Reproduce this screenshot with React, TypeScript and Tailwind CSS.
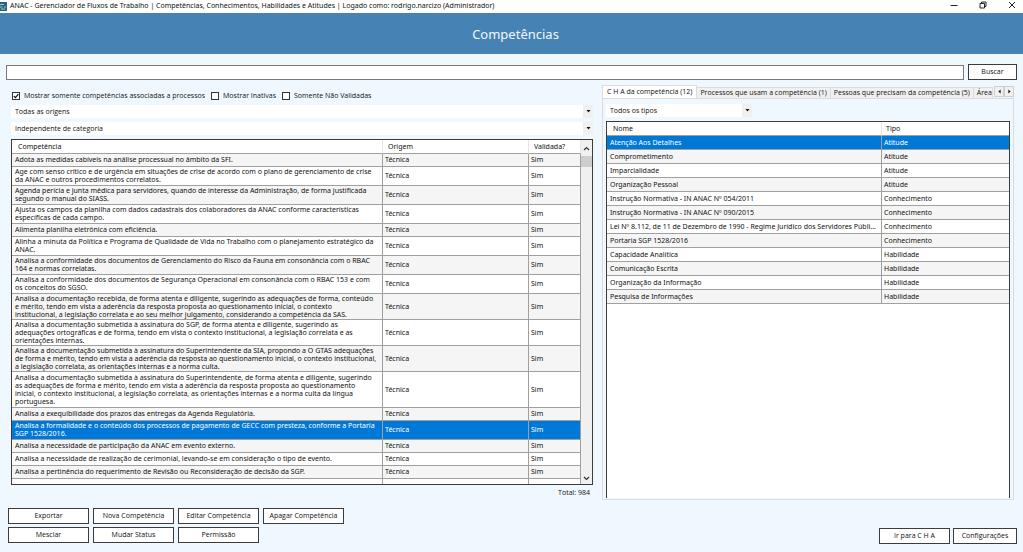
import React, { useState } from "react";
import clsx from "clsx";

interface Competencia {
  nome: string;
  linhas: 1 | 2 | 3 | 4;
}

const competencias: Competencia[] = [
  { linhas: 1, nome: "Adota as medidas cabíveis na análise processual no âmbito da SFI." },
  { linhas: 2, nome: "Age com senso crítico e de urgência em situações de crise de acordo com o plano de gerenciamento de crise\nda ANAC e outros procedimentos correlatos." },
  { linhas: 2, nome: "Agenda perícia e junta médica para servidores, quando de interesse da Administração, de forma justificada\nsegundo o manual do SIASS." },
  { linhas: 2, nome: "Ajusta os campos da planilha com dados cadastrais dos colaboradores da ANAC conforme características\nespecíficas de cada campo." },
  { linhas: 1, nome: "Alimenta planilha eletrônica com eficiência." },
  { linhas: 2, nome: "Alinha a minuta da Política e Programa de Qualidade de Vida no Trabalho com o planejamento estratégico da\nANAC." },
  { linhas: 2, nome: "Analisa a conformidade dos documentos de Gerenciamento do Risco da Fauna em consonância com o RBAC\n164 e normas correlatas." },
  { linhas: 2, nome: "Analisa a conformidade dos documentos de Segurança Operacional em consonância com o RBAC 153 e com\nos conceitos do SGSO." },
  { linhas: 3, nome: "Analisa a documentação recebida, de forma atenta e diligente, sugerindo as adequações de forma, conteúdo\ne mérito, tendo em vista a aderência da resposta proposta ao questionamento inicial, o contexto\ninstitucional, a legislação correlata e ao seu melhor julgamento, considerando a competência da SAS." },
  { linhas: 3, nome: "Analisa a documentação submetida à assinatura do SGP, de forma atenta e diligente, sugerindo as\nadequações ortográficas e de forma, tendo em vista o contexto institucional, a legislação correlata e as\norientações internas." },
  { linhas: 3, nome: "Analisa a documentação submetida à assinatura do Superintendente da SIA, propondo a O GTAS adequações\nde forma e mérito, tendo em vista a aderência da resposta ao questionamento inicial, o contexto institucional,\na legislação correlata, as orientações internas e a norma culta." },
  { linhas: 4, nome: "Analisa a documentação submetida à assinatura do Superintendente, de forma atenta e diligente, sugerindo\nas adequações de forma e mérito, tendo em vista a aderência da resposta proposta ao questionamento\ninicial, o contexto institucional, a legislação correlata, as orientações internas e a norma culta da língua\nportuguesa." },
  { linhas: 1, nome: "Analisa a exequibilidade dos prazos das entregas da Agenda Regulatória." },
  { linhas: 2, nome: "Analisa a formalidade e o conteúdo dos processos de pagamento de GECC com presteza, conforme a Portaria\nSGP 1528/2016." },
  { linhas: 1, nome: "Analisa a necessidade de participação da ANAC em evento externo." },
  { linhas: 1, nome: "Analisa a necessidade de realização de cerimonial, levando-se em consideração o tipo de evento." },
  { linhas: 1, nome: "Analisa a pertinência do requerimento de Revisão ou Reconsideração de decisão da SGP." },
];

const cha = [
  ["Atenção Aos Detalhes", "Atitude"],
  ["Comprometimento", "Atitude"],
  ["Imparcialidade", "Atitude"],
  ["Organização Pessoal", "Atitude"],
  ["Instrução Normativa - IN ANAC Nº 054/2011", "Conhecimento"],
  ["Instrução Normativa - IN ANAC Nº 090/2015", "Conhecimento"],
  ["Lei Nº 8.112, de 11 de Dezembro de 1990 - Regime Jurídico dos Servidores Públi...", "Conhecimento"],
  ["Portaria SGP 1528/2016", "Conhecimento"],
  ["Capacidade Analítica", "Habilidade"],
  ["Comunicação Escrita", "Habilidade"],
  ["Organização da Informação", "Habilidade"],
  ["Pesquisa de Informações", "Habilidade"],
];

const tabs = [
  "C H A da competência (12)",
  "Processos que usam a competência (1)",
  "Pessoas que precisam da competência (5)",
  "Área",
];

const rowHeights = { 1: "h-[13px]", 2: "h-[19px]", 3: "h-[26px]", 4: "h-[36px]" };

function ActionButton({ children, className }: { children: React.ReactNode; className?: string }) {
  return (
    <button
      type="button"
      className={clsx("h-4 border border-[#3c3c3c] bg-white text-center leading-3 whitespace-nowrap hover:bg-sky-50", className)}
    >
      {children}
    </button>
  );
}

function Combo({ label, option, className }: { label: string; option: string; className?: string }) {
  return (
    <div className={clsx("relative h-[13px] bg-white", className)}>
      <select aria-label={label} className="block h-full w-full appearance-none bg-transparent pl-1 leading-3 outline-none">
        <option>{option}</option>
      </select>
      <span className="pointer-events-none absolute inset-y-0 right-0 flex w-[10px] items-center justify-center bg-[#f0f0f0]">
        <svg width="5" height="3" viewBox="0 0 5 3"><path d="M0.5 0h4L2.5 2.6z" fill="#111" /></svg>
      </span>
    </div>
  );
}

function Check({ label, defaultChecked }: { label: string; defaultChecked?: boolean }) {
  return (
    <label className="flex items-center gap-1">
      <span className="relative flex size-2">
        <input
          type="checkbox"
          defaultChecked={defaultChecked}
          className="peer size-2 appearance-none border border-[#333] bg-white"
        />
        <svg viewBox="0 0 8 8" className="pointer-events-none absolute inset-0 hidden size-2 peer-checked:block">
          <path d="M1.8 4.1L3.4 5.7L6.4 2.2" fill="none" stroke="#111" strokeWidth="1.2" />
        </svg>
      </span>
      {label}
    </label>
  );
}

export default function App() {
  const [selected, setSelected] = useState(13);
  const [selectedCha, setSelectedCha] = useState(0);
  const [tab, setTab] = useState(0);

  return (
    <div className="flex h-screen flex-col overflow-hidden bg-[#f0f8ff] font-['Open_Sans','Noto_Sans',sans-serif] text-[7px] leading-[8px] text-[#111]">
      {/* Title bar */}
      <div className="flex h-[13px] shrink-0 items-start justify-between bg-white">
        <div className="flex items-center gap-[3px] font-['Noto_Sans',sans-serif] leading-3">
          <svg width="7" height="9" viewBox="0 0 7 9">
            <rect width="7" height="9" fill="#2b6478" />
            <path d="M0 2.5h4M0 5h2.5M4 5h2M1 7h4" stroke="#9cc7d4" />
          </svg>
          <span className="whitespace-nowrap">
            ANAC - Gerenciador de Fluxos de Trabalho | Competências, Conhecimentos, Habilidades e Atitudes | Logado como: rodrigo.narcizo (Administrador)
          </span>
        </div>
        <div className="flex h-[10px] items-center gap-[21px] pr-[7px]">
          <button type="button" aria-label="Minimizar">
            <svg width="8" height="8" viewBox="0 0 8 8"><path d="M0.5 4.5h7" stroke="#222" /></svg>
          </button>
          <button type="button" aria-label="Restaurar">
            <svg width="8" height="8" viewBox="0 0 8 8" fill="none" stroke="#222">
              <path d="M1 2.5h4.5v4.5h-4.5zM2.5 2.5V1H7v4.5H5.5" />
            </svg>
          </button>
          <button type="button" aria-label="Fechar">
            <svg width="8" height="8" viewBox="0 0 8 8"><path d="M1 1l6 6M7 1l-6 6" stroke="#222" /></svg>
          </button>
        </div>
      </div>

      <header className="flex h-[41px] shrink-0 items-center justify-center bg-[#4682b4]">
        <h1 className="pl-2 font-['Noto_Sans',sans-serif] text-[13px] leading-4 text-[#f0f8ff]">Competências</h1>
      </header>

      <form className="flex shrink-0 items-center gap-1 pt-[10px] pr-[6px] pl-[6px]" onSubmit={(e) => e.preventDefault()}>
        <input
          type="text"
          aria-label="Buscar competência"
          className="h-[15px] min-w-0 flex-1 border border-[#7a7a7a] bg-white px-1 outline-none"
        />
        <ActionButton className="w-[49px]">Buscar</ActionButton>
      </form>

      <main className="grid min-h-0 flex-1 grid-cols-[582fr_412fr] gap-[9px] pt-[5px] pr-[9px] pl-[11px]">
        <section className="flex min-h-0 min-w-0 flex-col">
          <div className="flex h-5 shrink-0 items-center gap-[6px] pt-px pl-px">
            <Check label="Mostrar somente competências associadas a processos" defaultChecked />
            <Check label="Mostrar Inativas" />
            <Check label="Somente Não Validadas" />
          </div>
          <Combo label="Origem" option="Todas as origens" className="shrink-0" />
          <Combo label="Categoria" option="Independente de categoria" className="mt-1 shrink-0" />

          <div className="mt-1 flex min-h-0 flex-1 border border-[#3c3c3c] bg-white">
            <div className="min-w-0 flex-1 overflow-hidden">
              <table className="w-full table-fixed border-separate border-spacing-0 font-['Noto_Sans',sans-serif]">
                <colgroup>
                  <col />
                  <col className="w-[146px]" />
                  <col className="w-[52px]" />
                </colgroup>
                <thead>
                  <tr className="h-[14px] text-left">
                    <th className="border-r border-b border-r-[#e5e5e5] border-b-[#a0a0a0] p-0 pl-[6px] font-normal">Competência</th>
                    <th className="border-r border-b border-r-[#e5e5e5] border-b-[#a0a0a0] p-0 pl-[5px] font-normal">Origem</th>
                    <th className="border-r border-b border-r-[#e5e5e5] border-b-[#a0a0a0] p-0 pl-[5px] font-normal">Validada?</th>
                  </tr>
                </thead>
                <tbody>
                  {competencias.map((c, i) => (
                    <tr
                      key={i}
                      onClick={() => setSelected(i)}
                      className={clsx(rowHeights[c.linhas], i === selected ? "bg-[#0078d7] text-white" : i % 2 === 0 ? "bg-[#f5f5f5]" : "bg-white")}
                    >
                      <td className="border-r border-b border-[#a0a0a0] p-0 pl-[3px] whitespace-pre">{c.nome}</td>
                      <td className="border-r border-b border-[#a0a0a0] p-0 pl-[2px]">Técnica</td>
                      <td className="border-r border-b border-[#a0a0a0] p-0 pl-[2px]">Sim</td>
                    </tr>
                  ))}
                  <tr className="h-[13px]">
                    <td className="border-r border-[#a0a0a0]" />
                    <td className="border-r border-[#a0a0a0]" />
                    <td className="border-r border-[#a0a0a0]" />
                  </tr>
                </tbody>
              </table>
            </div>
            <div className="flex w-[11px] shrink-0 flex-col items-center bg-[#f0f0f0]">
              <button type="button" aria-label="Rolar para cima" className="flex h-4 items-center">
                <svg width="7" height="5" viewBox="0 0 7 5"><path d="M1 4l2.5-2.5L6 4" fill="none" stroke="#333" strokeWidth="1.2" /></svg>
              </button>
              <div className="h-[11px] w-full bg-[#cdcdcd]" />
              <button type="button" aria-label="Rolar para baixo" className="mt-auto flex h-3 items-center">
                <svg width="7" height="5" viewBox="0 0 7 5"><path d="M1 1l2.5 2.5L6 1" fill="none" stroke="#333" strokeWidth="1.2" /></svg>
              </button>
            </div>
          </div>
          <p className="shrink-0 pt-1 pr-[3px] pb-[3px] text-right">Total: 984</p>
        </section>

        <section className="flex min-h-0 min-w-0 flex-col">
          <div className="flex h-[13px] shrink-0 items-end">
            {tabs.map((t, i) => (
              <button
                key={t}
                type="button"
                onClick={() => setTab(i)}
                className={clsx(
                  "shrink-0 border border-b-0 border-[#dcdcdc] whitespace-nowrap",
                  i === tab ? "h-[13px] bg-white px-1" : "-ml-px h-[11px] bg-[#f0f0f0]",
                  i !== tab && (i === 3 ? "pl-[3px]" : "px-[3px]")
                )}
              >
                {t}
              </button>
            ))}
            <div className="ml-auto flex shrink-0 self-start pt-px">
              <button type="button" aria-label="Abas anteriores" className="flex h-[11px] w-[10px] items-center justify-center border border-[#cfcfcf] bg-[#f0f0f0]">
                <svg width="3" height="5" viewBox="0 0 3 5"><path d="M2.6 0.5v4L0.4 2.5z" fill="#111" /></svg>
              </button>
              <button type="button" aria-label="Próximas abas" className="flex h-[11px] w-[10px] items-center justify-center border border-[#cfcfcf] bg-[#f0f0f0]">
                <svg width="3" height="5" viewBox="0 0 3 5"><path d="M0.4 0.5v4L2.6 2.5z" fill="#111" /></svg>
              </button>
            </div>
          </div>
          <div className="flex min-h-0 flex-1 flex-col border border-[#dcdcdc] px-[3px] pt-[5px] pb-px">
            <Combo label="Tipo" option="Todos os tipos" className="w-[146px] shrink-0" />
            <div className="mt-1 min-h-0 flex-1 overflow-hidden border border-b-0 border-[#3c3c3c] bg-white">
              <table className="w-full table-fixed border-separate border-spacing-0 font-['Noto_Sans',sans-serif]">
                <colgroup>
                  <col />
                  <col className="w-[127px]" />
                </colgroup>
                <thead>
                  <tr className="h-[14px] text-left">
                    <th className="border-r border-b border-r-[#e5e5e5] border-b-[#a0a0a0] p-0 pl-[6px] font-normal">Nome</th>
                    <th className="border-b border-[#a0a0a0] p-0 pl-1 font-normal">Tipo</th>
                  </tr>
                </thead>
                <tbody>
                  {cha.map(([nome, tipo], i) => (
                    <tr
                      key={nome}
                      onClick={() => setSelectedCha(i)}
                      className={clsx("h-[14px]", i === selectedCha ? "bg-[#0078d7] text-white" : i % 2 === 1 ? "bg-[#f5f5f5]" : "bg-white")}
                    >
                      <td className="border-r border-b border-[#a0a0a0] p-0 pl-[3px] whitespace-nowrap">{nome}</td>
                      <td className="border-b border-[#a0a0a0] p-0 pl-[2px]">{tipo}</td>
                    </tr>
                  ))}
                </tbody>
              </table>
            </div>
          </div>
        </section>
      </main>

      <footer className="flex shrink-0 items-end justify-between pt-2 pr-[6px] pb-2 pl-2">
        <div className="grid grid-cols-[repeat(4,81px)] gap-x-[4px] gap-y-[3px] pb-px">
          <ActionButton>Exportar</ActionButton>
          <ActionButton>Nova Competência</ActionButton>
          <ActionButton>Editar Competência</ActionButton>
          <ActionButton>Apagar Competência</ActionButton>
          <ActionButton>Mesclar</ActionButton>
          <ActionButton>Mudar Status</ActionButton>
          <ActionButton>Permissão</ActionButton>
        </div>
        <div className="flex gap-[3px]">
          <ActionButton className="w-[71px]">Ir para C H A</ActionButton>
          <ActionButton className="w-[64px]">Configurações</ActionButton>
        </div>
      </footer>
    </div>
  );
}
